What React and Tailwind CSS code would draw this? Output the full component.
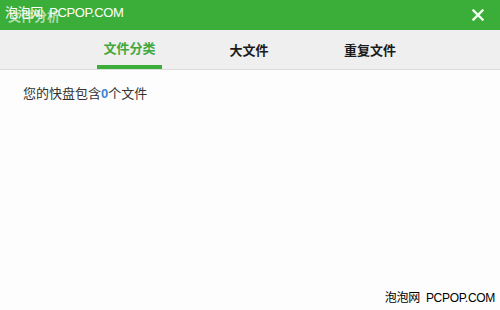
import React from 'react';

const font = { fontFamily: '"Liberation Sans", "Noto Sans CJK SC", sans-serif' };

const tabs = [
  { label: '文件分类', active: true, cls: 'w-[65px]' },
  { label: '大文件', active: false, cls: 'w-[50px] ml-[62px]' },
  { label: '重复文件', active: false, cls: 'w-[60px] ml-[66px]' },
];

export default function App() {
  return (
    <div className="w-[500px] h-[310px] flex flex-col bg-[#fdfdfd] relative overflow-hidden" style={font}>
      {/* Title bar */}
      <div className="h-[30px] bg-[#3aae38] flex items-center justify-between pl-[8px] pr-[16px] shrink-0">
        <span className="text-[13px] text-white/60 font-bold pt-[4px]">文件分析</span>
        <svg width="12" height="12" viewBox="0 0 12 12">
          <path d="M1.5 1.5 L10.5 10.5 M10.5 1.5 L1.5 10.5" stroke="#f2fff0" strokeWidth="2.4" strokeLinecap="square" />
        </svg>
      </div>

      {/* Tabs */}
      <div className="h-[40px] bg-[#efefef] border-b border-[#dcdcdc] flex pl-[97px] shrink-0">
        {tabs.map((t) => (
          <div
            key={t.label}
            className={
              'h-full flex items-center justify-center whitespace-nowrap text-[13px] font-bold pt-[2px] ' +
              t.cls +
              (t.active ? ' text-[#41a83d] border-b-[4px] border-[#3aae38]' : ' text-[#1a1a1a]')
            }
          >
            {t.label}
          </div>
        ))}
      </div>

      {/* Body */}
      <div className="flex-1 px-[23px] pt-[14px]">
        <p className="text-[13px] text-[#333]">
          您的快盘包含<span className="text-[#3f86d6] font-bold">0</span>个文件
        </p>
      </div>

      {/* Watermarks */}
      <div className="absolute left-[5px] top-[3px] text-[13px] text-white tracking-[-0.4px] whitespace-nowrap">泡泡网&nbsp;&nbsp;PCPOP.COM</div>
      <div className="absolute right-[5px] bottom-[3px] text-[12px] text-black tracking-[-0.3px] whitespace-nowrap">泡泡网&nbsp;&nbsp;PCPOP.COM</div>
    </div>
  );
}
